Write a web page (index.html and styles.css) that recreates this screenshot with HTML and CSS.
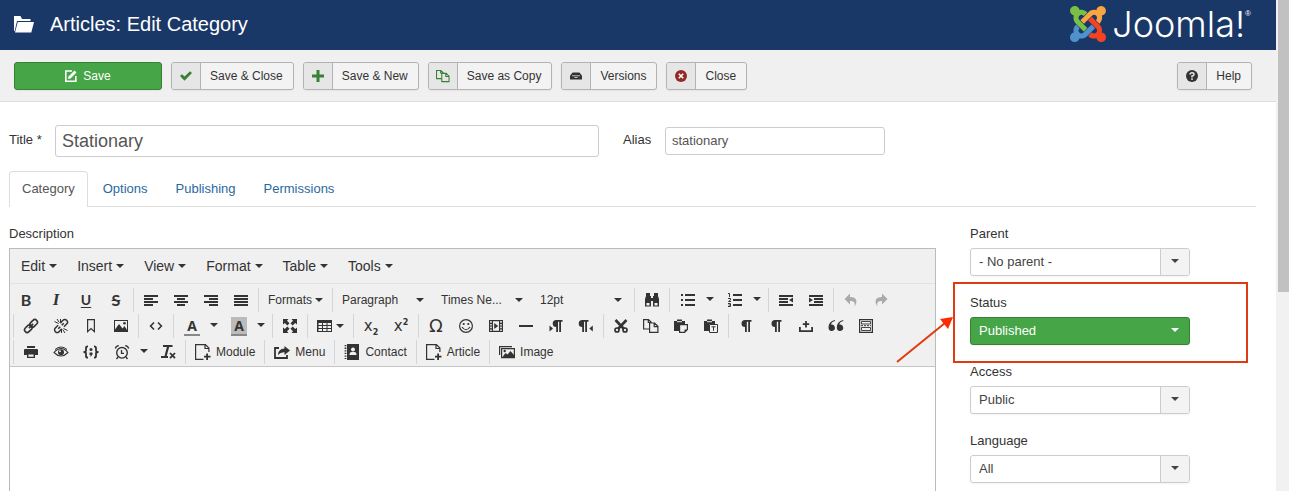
FILE: index.html
```html
<!DOCTYPE html>
<html lang="en">
<head>
<meta charset="utf-8">
<title>Articles: Edit Category</title>
<meta name="viewport" content="width=device-width, initial-scale=1">
<link rel="stylesheet" href="styles.css">
</head>
<body>
<svg class="sprite" aria-hidden="true">
  <symbol id="caret" viewBox="0 0 8 4"><path d="M0 0h8L4 4z"/></symbol>
  <symbol id="left" viewBox="0 0 16 16"><path d="M1 3h14v2H1zM1 6h9v2H1zM1 9h14v2H1zM1 12h9v2H1z"/></symbol>
  <symbol id="center" viewBox="0 0 16 16"><path d="M1 3h14v2H1zM4 6h8v2H4zM1 9h14v2H1zM4 12h8v2H4z"/></symbol>
  <symbol id="right" viewBox="0 0 16 16"><path d="M1 3h14v2H1zM6 6h9v2H6zM1 9h14v2H1zM6 12h9v2H6z"/></symbol>
  <symbol id="justify" viewBox="0 0 16 16"><path d="M1 3h14v2H1zM1 6h14v2H1zM1 9h14v2H1zM1 12h14v2H1z"/></symbol>
  <symbol id="find" viewBox="0 0 16 16"><path d="M2 1h4v3h1v2h2V4h1V1h4v3l1 3v7.500H9V9H7v5.500H1V7l1-3zM2.500 11v2.500h3V11zM10.500 11v2.500h3V11z" fill-rule="evenodd"/></symbol>
  <symbol id="bullets" viewBox="0 0 16 16"><path d="M1 2h2v2H1zM5 2h10v2H5zM1 7h2v2H1zM5 7h10v2H5zM1 12h2v2H1zM5 12h10v2H5z"/></symbol>
  <symbol id="numbers" viewBox="0 0 16 16"><path d="M6 2h9v2H6zM6 7h9v2H6zM6 12h9v2H6z"/><path d="M1 1.500h1.500V5M1 6.500h2.500V8L1.500 9.500H4M1 11.500h2.500v3H1M1.500 13h2" fill="none" stroke="currentColor"/></symbol>
  <symbol id="outdent" viewBox="0 0 16 16"><path d="M1 3h14v2H1zM1 6h9v2H1zM1 9h9v2H1zM1 12h14v2H1zM15 5.500v5l-4-2.500z"/></symbol>
  <symbol id="indent" viewBox="0 0 16 16"><path d="M1 3h14v2H1zM6 6h9v2H6zM6 9h9v2H6zM1 12h14v2H1zM1 5.500v5L5 8z"/></symbol>
  <symbol id="undo" viewBox="0 0 16 16"><path d="M7 1.500v3.500c7 0 8 5 4.500 9.500 1-4-.5-5.500-4.500-5.500v3.500L1.500 7z"/></symbol>
  <symbol id="redo" viewBox="0 0 16 16"><path d="M9 1.500v3.500c-7 0-8 5-4.500 9.500-1-4 .5-5.500 4.500-5.500v3.500L14.500 7z"/></symbol>
  <symbol id="link" viewBox="0 0 16 16"><g transform="rotate(-45 8 8)" fill="none" stroke="currentColor" stroke-width="1.600"><rect x="0" y="5.400" width="8.500" height="5.200" rx="2.600"/><rect x="7.500" y="5.400" width="8.500" height="5.200" rx="2.600"/><path d="M5 8h6"/></g></symbol>
  <symbol id="unlink" viewBox="0 0 16 16"><g fill="none" stroke="currentColor" stroke-width="1.500"><g transform="rotate(-45 8 8)"><path d="M6.500 5.400H2.600a2.600 2.600 0 0 0 0 5.200h3.900M9.500 5.400h3.900a2.600 2.600 0 0 1 0 5.200H9.500M4 8h3M9 8h3"/></g><path d="M1.500 3.500l4 2M4 1l2.300 3.500M7.500 1v3M14.500 12.500l-4-2M12 15l-2.300-3.500M8.500 15v-3" stroke-width="1"/></g></symbol>
  <symbol id="bookmark" viewBox="0 0 16 16"><path d="M4.600 1.600h6.800v12L8 10.500l-3.400 3.100z" fill="none" stroke="currentColor" stroke-width="1.200"/></symbol>
  <symbol id="picture" viewBox="0 0 16 16"><path d="M1 2h14v12H1zM2 3v8.500L6 6l3.500 4.500L11.500 8l2.500 4V3z" fill-rule="evenodd"/><circle cx="11.500" cy="5.200" r="1.300"/></symbol>
  <symbol id="code" viewBox="0 0 16 16"><path d="M6 4.500L2.600 8 6 11.500M10 4.500L13.400 8 10 11.500" fill="none" stroke="currentColor" stroke-width="1.600"/></symbol>
  <symbol id="expand" viewBox="0 0 16 16"><path d="M1 1h5.500L5 2.800l2.500 2.500-2.200 2.200L2.800 5 1 6.500zM15 1v5.500L13.200 5l-2.500 2.500-2.200-2.200L11 2.800 9.500 1zM1 15V9.500L2.800 11l2.500-2.500 2.200 2.200L5 13.200 6.500 15zM15 15H9.500l1.500-1.800-2.500-2.500 2.200-2.200 2.500 2.500L15 9.500z"/></symbol>
  <symbol id="table" viewBox="0 0 16 16"><path d="M0 2h15v12H0zM1.500 5v2H5V5zM6 5v2h3.500V5zM10.500 5v2H14V5zM1.500 8v2H5V8zM6 8v2h3.500V8zM10.500 8v2H14V8zM1.500 11v2H5v-2zM6 11v2h3.500v-2zM10.500 11v2H14v-2z" fill-rule="evenodd"/></symbol>
  <symbol id="smile" viewBox="0 0 16 16"><circle cx="8" cy="8" r="6.400" fill="none" stroke="currentColor" stroke-width="1.200"/><circle cx="5.700" cy="6" r="1.100"/><circle cx="10.300" cy="6" r="1.100"/><path d="M4 9q4 5.500 8 0" fill="none" stroke="currentColor" stroke-width="1.200"/></symbol>
  <symbol id="film" viewBox="0 0 16 16"><path d="M1 2h14v12H1zM2.200 3v1.800h1.600V3zM2.200 6v1.600h1.600V6zM2.200 8.600v1.600h1.600V8.600zM2.200 11.400V13h1.600v-1.600zM12.200 3v1.800h1.600V3zM12.200 6v1.600h1.600V6zM12.200 8.600v1.600h1.600V8.600zM12.200 11.400V13h1.600v-1.600zM5 3.200v9.600h6V3.200zM6.200 5l4 3-4 3z" fill-rule="evenodd"/></symbol>
  <symbol id="rule" viewBox="0 0 16 16"><path d="M1 7h14v2H1z"/></symbol>
  <symbol id="ltr" viewBox="0 0 16 16"><path d="M14.500 2v1.700H13V14h-1.800V3.700H10V14H8.200V9a3.500 3.500 0 0 1 0-7zM1.500 7.500v6L5 10.500z"/></symbol>
  <symbol id="rtl" viewBox="0 0 16 16"><path d="M10.500 2v1.700H9V14H7.200V3.700H6V14H4.200V9a3.500 3.500 0 0 1 0-7zM14.800 7.500v6l-3.500-3z"/></symbol>
  <symbol id="cut" viewBox="0 0 16 16"><g fill="none" stroke="currentColor"><path d="M2.500 2L11 11M13.500 2L5 11" stroke-width="2.600"/><circle cx="4" cy="12" r="2" stroke-width="1.700"/><circle cx="12" cy="12" r="2" stroke-width="1.700"/></g></symbol>
  <symbol id="copy" viewBox="0 0 16 16"><path d="M6.500 11H.600V1.600h4.900l2.500 2.500V5M5.300 1.600v2.900H8M6.600 5h5l3.300 3.200v6.200H6.600zM11.200 5v3.600h3.700" fill="none" stroke="currentColor" stroke-width="1.200"/></symbol>
  <symbol id="paste" viewBox="0 0 16 16"><path d="M1 3h3V1.500h5V3h3v3H6v7H1z"/><path d="M4 3.700h5" stroke="#f0f0f0"/><path d="M6.600 6.600h7.800v5l-2.800 2.800h-5z" fill="#f0f0f0" stroke="currentColor" stroke-width="1.200"/><path d="M11.500 14.500v-3h3z"/></symbol>
  <symbol id="pastetext" viewBox="0 0 16 16"><path d="M1 3h3V1.500h5V3h3v3H6v7H1z"/><path d="M4 3.700h5" stroke="#f0f0f0"/><path d="M6.500 6.500h8v8h-8z" fill="#f0f0f0" stroke="currentColor"/><path d="M8.500 8.800h4M10.500 8.800v4" stroke="currentColor"/></symbol>
  <symbol id="para" viewBox="0 0 16 16"><path d="M13.500 2v1.700H12V14h-1.800V3.700H8.800V14H7V9a3.500 3.500 0 0 1 0-7z"/></symbol>
  <symbol id="nbsp" viewBox="0 0 16 16"><path d="M1 9h1.800v3.200h10.400V9H15v5H1z"/><path d="M7.100 3h1.800v2.200h2.300V7H8.900v2.500H7.100V7H4.800V5.200h2.300z"/></symbol>
  <symbol id="quote" viewBox="0 0 16 16"><path d="M7 3Q3.500 3.500 3 6.600a3.200 3.200 0 1 1-2.500 3.200Q.300 3.500 7 2zM15.300 3q-3.500.5-4 3.600a3.200 3.200 0 1 1-2.500 3.200Q8.600 3.500 15.300 2z"/></symbol>
  <symbol id="template" viewBox="0 0 16 16"><path d="M1.600 1.600h12.800v12.800H1.600z" fill="none" stroke="currentColor" stroke-width="1.200"/><path d="M3.500 3.500h9v2.500h-9zM3.500 9.500h9v3h-9z" fill="none" stroke="currentColor" stroke-width=".9"/><path d="M3 7.700h10" stroke="currentColor" stroke-dasharray="2 1"/></symbol>
  <symbol id="print" viewBox="0 0 16 16"><path d="M4 2h8v2H4zM1.500 5h13l.5 1v5h-3V9H4v2H1V6z"/><path d="M4.700 9.700h6.600v3.700H4.700z" fill="#f0f0f0" stroke="currentColor" stroke-width="1.400"/></symbol>
  <symbol id="eye" viewBox="0 0 16 16"><path d="M1 8.500q7-8 14 0-7 7-14 0z" fill="none" stroke="currentColor" stroke-width="1.100"/><path d="M2 5.500q6-5 12 0" fill="none" stroke="currentColor" stroke-width="1"/><circle cx="8" cy="8.300" r="3"/><circle cx="7" cy="7.300" r="1" fill="#f0f0f0"/></symbol>
  <symbol id="snippet" viewBox="0 0 16 16"><path d="M5 2.300Q3 2.300 3 4v2.500Q3 8 .500 8q2.500 0 2.500 1.500V12q0 1.700 2 1.700M11 2.300q2 0 2 1.700v2.500Q13 8 15.500 8 13 8 13 9.500V12q0 1.700-2 1.700" fill="none" stroke="currentColor" stroke-width="1.800"/><circle cx="8" cy="5.500" r="1.500"/><path d="M6.500 8.500h3v2L7.500 13v-2h-1z"/></symbol>
  <symbol id="clock" viewBox="0 0 16 16"><circle cx="8" cy="8.800" r="5.300" fill="none" stroke="currentColor" stroke-width="1.400"/><path d="M7.500 6v3.300H10M1.300 4.500Q2 2 4.800 1.700M14.700 4.500Q14 2 11.200 1.700M4 13l-1.500 2M12 13l1.500 2" fill="none" stroke="currentColor" stroke-width="1.300"/></symbol>
  <symbol id="clear" viewBox="0 0 16 16"><path d="M3 2h9.500M8.300 2L5.600 12M1 13h7" fill="none" stroke="currentColor" stroke-width="2.200"/><path d="M10 9l5 5.200M15 9l-5 5.200" stroke="currentColor" stroke-width="1.800"/></symbol>
  <symbol id="fileadd" viewBox="0 0 16 16"><path d="M8.500 15.300H.600V.600h9.800l3.500 3.500v4M10 .600V4.500h4" fill="none" stroke="currentColor" stroke-width="1.200"/><path d="M11.200 9.500h1.800v2.200h2.500v1.800H13v2.500h-1.800v-2.500H9v-1.800h2.200z"/></symbol>
  <symbol id="share" viewBox="0 0 16 16"><path d="M5 4H1v10h12v-3" fill="none" stroke="currentColor" stroke-width="1.800"/><path d="M10.500 2L16 6.500 10.500 11V8.300Q6.500 8 4 11q0-6 6.500-6.500z"/></symbol>
  <symbol id="address" viewBox="0 0 16 16"><path d="M3 0h12v16H3zM9 3.500a2 2 0 1 0 .01 0zM5.500 11h7q0-3-2-3h-3q-2 0-2 3z" fill-rule="evenodd"/><path d="M1.500 1v14" stroke="currentColor" stroke-width="1.800" stroke-dasharray="1.300 1.300"/></symbol>
  <symbol id="pictures" viewBox="0 0 16 16"><path d="M.600 11V2.600H13M2.600 4.600h12.800v9H2.600z" fill="none" stroke="currentColor" stroke-width="1.200"/><path d="M3.500 13l3-4 2 1.500L11.500 7l3.500 4v2z"/><circle cx="5.700" cy="7" r="1.200"/></symbol>
</svg>

<div class="window">
  <div class="page">
    <header class="header">
      <svg class="folder" viewBox="0 0 20 17" aria-hidden="true"><path d="M0 0h6.500L8 3h8.500v2H3L.700 15H0z"/><path d="M3.800 6H20l-2.700 10.500H1z"/></svg>
      <h1 class="page-title">Articles: Edit Category</h1>
      <a class="brand" href="#" aria-label="Joomla!">
        <svg class="brand-mark" viewBox="0 32 448 448" aria-hidden="true">
          <path fill="#7ac143" d="M.6 92.100C.6 58.800 27.400 32 60.400 32c30 0 54.500 21.900 59.200 50.200 32.600-7.600 67.100.6 96.500 30l-44.300 44.300c-20.500-20.500-42.600-16.300-55.400-3.500-14.300 14.300-14.300 37.900 0 52.200l99.500 99.500-44 44.300c-87.700-87.200-49.700-49.700-99.800-99.700-26.800-26.500-35-64.800-24.800-98.900C20.400 144.600.6 120.700.6 92.100z"/>
          <path fill="#f9a541" d="M130.100 208.500l44.300 44.300c10-10 89.700-89.700 99.700-99.800 14.300-14.300 37.600-14.300 51.900 0 12.800 12.800 17 35-3.500 55.400l44 44.300c31.200-31.200 38.500-67.600 28.900-101.200 29.200-4.100 51.900-29.200 51.900-59.500 0-33.200-26.800-60.100-59.800-60.100-30.300 0-55.400 22.500-59.500 51.600-33.800-9.900-71.700-1.500-98.300 25.100-18.300 19.100-71.100 71.500-99.600 99.900z"/>
          <path fill="#f44321" d="M396.400 360.700c8.200-32.700-.9-68.500-26.300-93.900-11.800-12.200 5 4.700-99.500-99.700l-44.300 44.300 99.700 99.700c14.300 14.300 14.300 37.600 0 51.900-12.800 12.800-35 17-55.400-3.500l-44 44.300c27.600 30.200 68 38.800 102.700 28 5.500 27.400 29.700 48.100 58.900 48.100 33 0 59.800-26.800 59.800-60.100 0-30.200-22.500-55-51.600-59.100z"/>
          <path fill="#5091cd" d="M312.100 307.600l-44-44.300c-87 86.400-50.400 50.400-99.700 99.800-14.300 14.300-37.600 14.300-51.900 0-13.100-13.400-16.900-35.300 3.200-55.400l-44-44.300c-30.200 30.200-38 65.200-29.500 98.300-26.700 6-46.200 29.900-46.200 58.200C0 453.200 26.800 480 59.800 480c28.600 0 52.500-19.800 58.600-46.700 32.700 8.200 68.500-.6 94.200-26 32.100-32 12.200-12.400 99.500-99.700z"/>
        </svg>
        <span class="brand-name">Joomla!</span><span class="brand-reg">®</span>
      </a>
    </header>

    <div class="actions">
      <button class="btn btn-save" type="button"><svg class="btn-glyph" viewBox="0 0 12 12" aria-hidden="true"><path d="M7 1H.800v10.200h10V6" fill="none" stroke="currentColor" stroke-width="1.600"/><path d="M9.500.500l2 2L5.500 8.500 3 9l.5-2.500z"/></svg>Save</button>
      <button class="btn" type="button"><span class="btn-icon green"><svg class="btn-glyph" viewBox="0 0 12 12"><path d="M0 6l2-1.800L4.500 6.500 10 1.200l2 1.800-7.500 7.700z"/></svg></span><span class="btn-text">Save &amp; Close</span></button>
      <button class="btn" type="button"><span class="btn-icon green"><svg class="btn-glyph" viewBox="0 0 12 12"><path d="M4.500 0h3v4.500H12v3H7.500V12h-3V7.500H0v-3h4.500z"/></svg></span><span class="btn-text">Save &amp; New</span></button>
      <button class="btn" type="button"><span class="btn-icon green"><svg class="btn-glyph wide"><use href="#copy"/></svg></span><span class="btn-text">Save as Copy</span></button>
      <button class="btn" type="button"><span class="btn-icon"><svg class="btn-glyph" viewBox="0 0 12 12"><path d="M3 2.500h6q1 0 3 3.500v3.500H0V6q2-3.500 3-3.500z"/><path d="M2 5.800h8M4.500 7.500h3" stroke="#e6e6e6" fill="none" stroke-width=".8"/></svg></span><span class="btn-text">Versions</span></button>
      <button class="btn" type="button"><span class="btn-icon red"><svg class="btn-glyph" viewBox="0 0 12 12"><circle cx="6" cy="6" r="6"/><path d="M3.800 3.800l4.400 4.400M8.200 3.800L3.800 8.200" stroke="#fff" stroke-width="1.600"/></svg></span><span class="btn-text">Close</span></button>
      <button class="btn btn-help" type="button"><span class="btn-icon"><svg class="btn-glyph" viewBox="0 0 12 12"><circle cx="6" cy="6" r="6"/><path d="M4 4.500Q4 2.800 6 2.800t2 1.600Q8 5.500 6 6v1.500M6 8.300V10" stroke="#e6e6e6" stroke-width="1.500" fill="none"/></svg></span><span class="btn-text">Help</span></button>
    </div>

    <main class="content">
      <form class="title-row">
        <label class="title-label" for="title">Title *</label>
        <input class="input input-title" id="title" type="text" value="Stationary">
        <label class="alias-label" for="alias">Alias</label>
        <input class="input input-alias" id="alias" type="text" value="stationary">
      </form>

      <nav class="tabs">
        <a class="tab active" href="#category">Category</a>
        <a class="tab" href="#options">Options</a>
        <a class="tab" href="#publishing">Publishing</a>
        <a class="tab" href="#permissions">Permissions</a>
      </nav>

      <div class="columns">
        <section class="main-col">
          <label class="label" for="description">Description</label>
          <div class="editor">
            <div class="menubar">
              <button class="menu" type="button">Edit<svg class="caret"><use href="#caret"/></svg></button>
              <button class="menu" type="button">Insert<svg class="caret"><use href="#caret"/></svg></button>
              <button class="menu" type="button">View<svg class="caret"><use href="#caret"/></svg></button>
              <button class="menu" type="button">Format<svg class="caret"><use href="#caret"/></svg></button>
              <button class="menu" type="button">Table<svg class="caret"><use href="#caret"/></svg></button>
              <button class="menu" type="button">Tools<svg class="caret"><use href="#caret"/></svg></button>
            </div>
            <div class="tools">
              <div class="tool-row">
                <div class="group first">
                  <button class="tool g-bold" type="button">B</button>
                  <button class="tool g-italic" type="button">I</button>
                  <button class="tool g-under" type="button">U</button>
                  <button class="tool g-strike" type="button">S</button>
                </div>
                <div class="group">
                  <button class="tool" type="button" aria-label="Align left"><svg class="ic"><use href="#left"/></svg></button>
                  <button class="tool" type="button" aria-label="Align center"><svg class="ic"><use href="#center"/></svg></button>
                  <button class="tool" type="button" aria-label="Align right"><svg class="ic"><use href="#right"/></svg></button>
                  <button class="tool" type="button" aria-label="Justify"><svg class="ic"><use href="#justify"/></svg></button>
                </div>
                <div class="group">
                  <button class="tool tool-text formats" type="button">Formats<svg class="caret"><use href="#caret"/></svg></button>
                </div>
                <div class="group">
                  <span class="listbox"><select aria-label="Block format"><option>Paragraph</option></select><svg class="caret"><use href="#caret"/></svg></span>
                  <span class="listbox"><select aria-label="Font family"><option>Times Ne...</option></select><svg class="caret"><use href="#caret"/></svg></span>
                  <span class="listbox"><select aria-label="Font size"><option>12pt</option></select><svg class="caret"><use href="#caret"/></svg></span>
                </div>
                <div class="group">
                  <button class="tool" type="button" aria-label="Find and replace"><svg class="ic"><use href="#find"/></svg></button>
                </div>
                <div class="group">
                  <button class="tool split" type="button" aria-label="Bullet list"><svg class="ic"><use href="#bullets"/></svg></button><button class="open" type="button" aria-label="Bullet styles"><svg class="caret"><use href="#caret"/></svg></button>
                  <button class="tool split" type="button" aria-label="Numbered list"><svg class="ic"><use href="#numbers"/></svg></button><button class="open" type="button" aria-label="Number styles"><svg class="caret"><use href="#caret"/></svg></button>
                </div>
                <div class="group">
                  <button class="tool" type="button" aria-label="Decrease indent"><svg class="ic"><use href="#outdent"/></svg></button>
                  <button class="tool" type="button" aria-label="Increase indent"><svg class="ic"><use href="#indent"/></svg></button>
                </div>
                <div class="group">
                  <button class="tool muted" type="button" aria-label="Undo"><svg class="ic"><use href="#undo"/></svg></button>
                  <button class="tool muted" type="button" aria-label="Redo"><svg class="ic"><use href="#redo"/></svg></button>
                </div>
              </div>
              <div class="tool-row">
                <div class="group">
                  <button class="tool" type="button" aria-label="Insert link"><svg class="ic"><use href="#link"/></svg></button>
                  <button class="tool" type="button" aria-label="Remove link"><svg class="ic"><use href="#unlink"/></svg></button>
                  <button class="tool" type="button" aria-label="Anchor"><svg class="ic"><use href="#bookmark"/></svg></button>
                  <button class="tool" type="button" aria-label="Insert image"><svg class="ic"><use href="#picture"/></svg></button>
                </div>
                <div class="group">
                  <button class="tool" type="button" aria-label="Source code"><svg class="ic"><use href="#code"/></svg></button>
                </div>
                <div class="group">
                  <button class="tool split" type="button"><span class="letter">A</span></button><button class="open" type="button" aria-label="Text colors"><svg class="caret"><use href="#caret"/></svg></button>
                  <button class="tool split" type="button"><span class="letter back">A</span></button><button class="open" type="button" aria-label="Background colors"><svg class="caret"><use href="#caret"/></svg></button>
                </div>
                <div class="group">
                  <button class="tool" type="button" aria-label="Fullscreen"><svg class="ic"><use href="#expand"/></svg></button>
                </div>
                <div class="group">
                  <button class="tool tool-text table-menu" type="button" aria-label="Table"><svg class="ic"><use href="#table"/></svg><svg class="caret"><use href="#caret"/></svg></button>
                </div>
                <div class="group">
                  <button class="tool g-script" type="button"><span>x<sub>2</sub></span></button>
                  <button class="tool g-script" type="button"><span>x<sup>2</sup></span></button>
                </div>
                <div class="group">
                  <button class="tool g-omega" type="button">Ω</button>
                  <button class="tool" type="button" aria-label="Emoticons"><svg class="ic"><use href="#smile"/></svg></button>
                  <button class="tool" type="button" aria-label="Insert video"><svg class="ic"><use href="#film"/></svg></button>
                  <button class="tool" type="button" aria-label="Horizontal line"><svg class="ic"><use href="#rule"/></svg></button>
                  <button class="tool" type="button" aria-label="Left to right"><svg class="ic"><use href="#ltr"/></svg></button>
                  <button class="tool" type="button" aria-label="Right to left"><svg class="ic"><use href="#rtl"/></svg></button>
                </div>
                <div class="group">
                  <button class="tool" type="button" aria-label="Cut"><svg class="ic"><use href="#cut"/></svg></button>
                  <button class="tool" type="button" aria-label="Copy"><svg class="ic"><use href="#copy"/></svg></button>
                  <button class="tool" type="button" aria-label="Paste"><svg class="ic"><use href="#paste"/></svg></button>
                  <button class="tool" type="button" aria-label="Paste as text"><svg class="ic"><use href="#pastetext"/></svg></button>
                </div>
                <div class="group">
                  <button class="tool" type="button" aria-label="Show blocks"><svg class="ic"><use href="#para"/></svg></button>
                  <button class="tool" type="button" aria-label="Show invisible characters"><svg class="ic"><use href="#para"/></svg></button>
                  <button class="tool" type="button" aria-label="Nonbreaking space"><svg class="ic"><use href="#nbsp"/></svg></button>
                  <button class="tool" type="button" aria-label="Blockquote"><svg class="ic"><use href="#quote"/></svg></button>
                  <button class="tool" type="button" aria-label="Insert template"><svg class="ic"><use href="#template"/></svg></button>
                </div>
              </div>
              <div class="tool-row">
                <div class="group">
                  <button class="tool" type="button" aria-label="Print"><svg class="ic"><use href="#print"/></svg></button>
                  <button class="tool" type="button" aria-label="Preview"><svg class="ic"><use href="#eye"/></svg></button>
                  <button class="tool" type="button" aria-label="Code sample"><svg class="ic"><use href="#snippet"/></svg></button>
                  <button class="tool split" type="button" aria-label="Insert date"><svg class="ic"><use href="#clock"/></svg></button><button class="open" type="button" aria-label="Date formats"><svg class="caret"><use href="#caret"/></svg></button>
                  <button class="tool" type="button" aria-label="Clear formatting"><svg class="ic"><use href="#clear"/></svg></button>
                </div>
                <div class="group"><button class="tool tool-text" type="button"><svg class="ic"><use href="#fileadd"/></svg>Module</button></div>
                <div class="group"><button class="tool tool-text" type="button"><svg class="ic"><use href="#share"/></svg>Menu</button></div>
                <div class="group"><button class="tool tool-text" type="button"><svg class="ic"><use href="#address"/></svg>Contact</button></div>
                <div class="group"><button class="tool tool-text" type="button"><svg class="ic"><use href="#fileadd"/></svg>Article</button></div>
                <div class="group"><button class="tool tool-text" type="button"><svg class="ic"><use href="#pictures"/></svg>Image</button></div>
              </div>
            </div>
            <textarea class="editor-body" id="description"></textarea>
          </div>
        </section>

        <aside class="side-col">
          <div class="field">
            <label class="label" for="parent">Parent</label>
            <span class="select"><select id="parent"><option>- No parent -</option></select><span class="select-arrow"><svg class="caret"><use href="#caret"/></svg></span></span>
          </div>
          <div class="field marked">
            <label class="label" for="status">Status</label>
            <span class="select published"><select id="status"><option>Published</option></select><span class="select-arrow"><svg class="caret"><use href="#caret"/></svg></span></span>
            <svg class="pointer" viewBox="0 0 58 48" aria-hidden="true"><path d="M1 46L49 7" stroke="#e03a14" stroke-width="2"/><path d="M57 1L52 13 44 3z" fill="#fb2c00"/></svg>
          </div>
          <div class="field">
            <label class="label" for="access">Access</label>
            <span class="select"><select id="access"><option>Public</option></select><span class="select-arrow"><svg class="caret"><use href="#caret"/></svg></span></span>
          </div>
          <div class="field">
            <label class="label" for="language">Language</label>
            <span class="select"><select id="language"><option>All</option></select><span class="select-arrow"><svg class="caret"><use href="#caret"/></svg></span></span>
          </div>
        </aside>
      </div>
    </main>
  </div>
  <div class="scrollbar" aria-hidden="true"><div class="thumb"></div></div>
</div>
</body>
</html>
```

FILE: styles.css
```css
* { box-sizing: border-box; }

body {
  margin: 0;
  background: #fff;
  color: #333;
  font-family: "Liberation Sans", Arial, sans-serif;
  font-size: 13px;
  line-height: 18px;
}

button, input, select, textarea { font: inherit; color: inherit; margin: 0; }
button { padding: 0; border: 0; background: none; cursor: pointer; }
svg { display: block; flex: none; fill: currentColor; }
.sprite { position: absolute; width: 0; height: 0; }
.caret { width: 8px; height: 4px; }
.ic { width: 16px; height: 16px; }

.window { display: flex; height: 100vh; overflow: hidden; }
.page { flex: 1; min-width: 0; display: flex; flex-direction: column; }

.header {
  display: flex;
  align-items: center;
  flex: none;
  height: 50px;
  padding: 0 25px 2px 14px;
  background: #1a3867;
  color: #fff;
}
.folder { width: 20px; height: 17px; margin-right: 16px; }
.page-title { margin: 0; font-size: 20px; line-height: 24px; font-weight: 400; }
.brand { display: flex; align-items: center; margin-left: auto; color: #fff; text-decoration: none; }
.brand-mark { width: 36px; height: 36px; margin-right: 6px; }
.brand-name { font-family: Inter, "DejaVu Sans", sans-serif; font-size: 36px; line-height: 36px; font-weight: 300; }
.brand-reg { align-self: flex-start; font-size: 8px; line-height: 16px; }

.actions {
  display: flex;
  align-items: center;
  flex: none;
  gap: 9px;
  height: 52px;
  padding: 0 24px 0 14px;
  background: #f0f0f0;
  border-bottom: 1px solid #ddd;
}
.btn {
  display: flex;
  height: 28px;
  border: 1px solid #b3b3b3;
  border-radius: 3px;
  background: #f3f3f3;
  box-shadow: 0 1px 2px rgba(0, 0, 0, .05);
  font-size: 12px;
  line-height: 26px;
  overflow: hidden;
}
.btn-icon {
  display: grid;
  place-items: center;
  width: 29px;
  height: 26px;
  background: #e6e6e6;
  border-right: 1px solid #b3b3b3;
}
.btn-glyph { width: 12px; height: 12px; }
.btn-glyph.wide { width: 14px; height: 14px; }
.btn-text { padding: 0 10px 0 9px; }
.btn-save {
  justify-content: center;
  align-items: center;
  gap: 6px;
  width: 148px;
  background: #46a546;
  border-color: #378137;
  color: #fff;
}
.btn-help { margin-left: auto; }
.green { color: #378137; }
.red { color: #942a25; }

.content { display: flex; flex-direction: column; flex: 1; min-height: 0; padding: 23px 20px 0 9px; }
.title-row { display: flex; align-items: center; margin: 0; }
.title-label { width: 46px; padding-bottom: 2px; }
.alias-label { width: 42px; margin-left: 24px; padding-bottom: 2px; }
.input {
  min-width: 0;
  border: 1px solid #ccc;
  border-radius: 3px;
  background: #fff;
  color: #555;
  outline: 0;
  padding: 0 6px;
}
.input-title { width: 544px; height: 32px; font-size: 18px; }
.input-alias { width: 220px; height: 28px; padding-bottom: 2px; }

.tabs { display: flex; gap: 2px; margin-top: 14px; border-bottom: 1px solid #ddd; }
.tab {
  margin-bottom: -1px;
  padding: 8px 12px 9px;
  border: 1px solid transparent;
  border-bottom: 0;
  border-radius: 4px 4px 0 0;
  color: #2a69a0;
  text-decoration: none;
}
.tab.active { border-color: #ddd; background: #fff; color: #555; }

.columns {
  display: grid;
  grid-template-columns: minmax(0, 1fr) 286px;
  gap: 34px;
  flex: 1;
  min-height: 0;
  padding-top: 18px;
}
.label { display: block; margin-bottom: 5px; }
.main-col { display: flex; flex-direction: column; }
.editor { display: flex; flex-direction: column; flex: 1; border: 1px solid #bbb; border-bottom: 0; }
.menubar { display: flex; height: 35px; padding-left: 1px; background: #f0f0f0; border-bottom: 1px solid #e2e2e2; }
.menu { display: flex; align-items: center; gap: 4px; padding: 0 10px; font-size: 14px; line-height: 20px; }

.tools {
  display: flex;
  flex-direction: column;
  gap: 2px;
  padding: 4px 0 2px 1px;
  background: #f0f0f0;
  border-bottom: 1px solid #c5c5c5;
  font-size: 12px;
  line-height: 16px;
}
.tool-row { display: flex; height: 24px; }
.group { display: flex; margin-left: 2px; padding-left: 2px; border-left: 1px solid #d5d5d5; }
.group.first { margin: 0; padding: 0; border: 0; }
.tool { display: flex; align-items: center; justify-content: center; width: 30px; height: 24px; }
.tool.split { width: 32px; }
.open { display: flex; align-items: center; width: 15px; height: 24px; padding: 0 5px 2px 2px; }
.tool-text { width: auto; padding: 0 7px; gap: 5px; }
.formats { gap: 3px; }
.table-menu { gap: 3px; }
.muted { color: #aaa; }

.g-bold, .g-under, .g-strike { font-family: Lato, sans-serif; font-size: 16px; font-weight: 700; }
.g-italic { font-family: "Liberation Serif", serif; font-size: 17px; font-weight: 700; font-style: italic; }
.g-under { font-size: 14px; text-decoration: underline; text-underline-offset: 2px; }
.g-strike { text-decoration: line-through; }
.g-omega { font-family: "DejaVu Sans", sans-serif; font-size: 18px; }
.g-script { font-family: "DejaVu Sans", sans-serif; font-size: 15px; font-weight: 400; }
.g-script sub, .g-script sup { font-size: 8px; line-height: 0; font-weight: 700; }
.letter {
  width: 16px;
  height: 19px;
  border-bottom: 2px solid #888;
  font-family: "Open Sans", sans-serif;
  font-size: 14px;
  line-height: 18px;
  font-weight: 700;
}
.letter.back { background: #bbb; }

.listbox, .select { display: grid; align-items: center; }
.listbox { width: 99px; }
.listbox > *, .select > * { grid-area: 1 / 1; }
select { appearance: none; border: 0; outline: 0; background: transparent; }
.listbox select { width: 100%; height: 24px; padding: 0 20px 0 7px; }
.listbox .caret { justify-self: end; margin-right: 10px; pointer-events: none; }
.editor-body { flex: 1; width: 100%; border: 0; outline: 0; resize: none; background: #fff; }

.side-col { display: flex; flex-direction: column; gap: 18px; }
.field { position: relative; }
.select {
  width: 220px;
  height: 28px;
  border: 1px solid #ccc;
  border-radius: 3px;
  box-shadow: 0 1px 2px rgba(0, 0, 0, .05);
  color: #444;
  overflow: hidden;
}
.select select { width: 100%; height: 26px; padding: 0 32px 0 8px; }
.select-arrow {
  display: grid;
  place-items: center;
  justify-self: end;
  width: 29px;
  height: 26px;
  padding-bottom: 2px;
  border-left: 1px solid #ccc;
  background: #f3f3f3;
  pointer-events: none;
}
.published { border-color: #378137; background: #46a546; color: #fff; }
.published .select-arrow { border-color: transparent; background: none; }
.marked::before {
  content: "";
  position: absolute;
  inset: -12px 8px -18px -17px;
  border: 2px solid #e03a14;
  pointer-events: none;
}
.pointer { position: absolute; left: -74px; top: 22px; width: 58px; height: 48px; pointer-events: none; }

.scrollbar { flex: none; width: 13px; padding-left: 2px; background: #f1f1f1; }
.thumb { height: 292px; background: #c1c1c1; }
```
